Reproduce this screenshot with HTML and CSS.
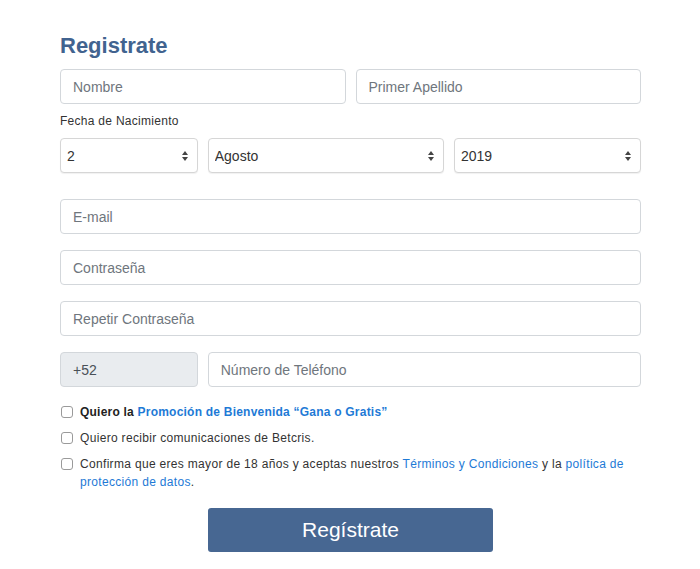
FILE: index.html
```html
<!DOCTYPE html>
<html lang="es">
<head>
<meta charset="utf-8">
<title>Registrate</title>
<link rel="stylesheet" href="styles.css">
</head>
<body>
<form class="page">
  <h1 class="title">Registrate</h1>
  <div class="row">
    <div class="col col-6"><input class="field" type="text" placeholder="Nombre"></div>
    <div class="col col-6"><input class="field" type="text" placeholder="Primer Apellido"></div>
  </div>
  <label class="label">Fecha de Nacimiento</label>
  <div class="row row-dob">
    <div class="col col-3 sel">
      <select class="field select"><option>2</option></select>
      <svg class="arrows" width="8" height="12" viewBox="0 0 8 12"><path d="M4 1 L7 5 H1 Z M4 11 L7 7 H1 Z" fill="#444"/></svg>
    </div>
    <div class="col col-5 sel">
      <select class="field select"><option>Agosto</option></select>
      <svg class="arrows" width="8" height="12" viewBox="0 0 8 12"><path d="M4 1 L7 5 H1 Z M4 11 L7 7 H1 Z" fill="#444"/></svg>
    </div>
    <div class="col col-4 sel">
      <select class="field select"><option>2019</option></select>
      <svg class="arrows" width="8" height="12" viewBox="0 0 8 12"><path d="M4 1 L7 5 H1 Z M4 11 L7 7 H1 Z" fill="#444"/></svg>
    </div>
  </div>
  <div class="row"><div class="col col-12"><input class="field" type="email" placeholder="E-mail"></div></div>
  <div class="row"><div class="col col-12"><input class="field" type="password" placeholder="Contraseña"></div></div>
  <div class="row"><div class="col col-12"><input class="field" type="password" placeholder="Repetir Contraseña"></div></div>
  <div class="row row-phone">
    <div class="col col-3"><input class="field readonly" type="text" value="+52" readonly></div>
    <div class="col col-9"><input class="field" type="tel" placeholder="Número de Teléfono"></div>
  </div>
  <div class="checks">
    <label class="check"><span class="box"></span><span class="ctext"><b>Quiero la <a class="link" href="#">Promoción de Bienvenida “Gana o Gratis”</a></b></span></label>
    <label class="check"><span class="box"></span><span class="ctext">Quiero recibir comunicaciones de Betcris.</span></label>
    <label class="check"><span class="box"></span><span class="ctext">Confirma que eres mayor de 18 años y aceptas nuestros <a class="link" href="#">Términos y Condiciones</a> y la <a class="link" href="#">política de</a> <a class="link" href="#">protección de datos</a>.</span></label>
  </div>
  <div class="row">
    <div class="col col-6 offset-3"><button class="btn" type="button">Regístrate</button></div>
  </div>
</form>
</body>
</html>
```

FILE: styles.css
```css
* { box-sizing: border-box; }
html, body { margin: 0; padding: 0; background: #fff; }
body {
  font-family: "Liberation Sans", Arial, sans-serif;
  color: #333;
  width: 700px;
}
.page {
  width: 581px;
  margin: 0 0 0 60px;
  padding-top: 33px;
}
.title {
  margin: 0 0 10px;
  font-size: 22px;
  line-height: 26px;
  font-weight: 700;
  color: #41638f;
}
.row {
  display: flex;
  margin: 0 -5px 16px;
}
.col { padding: 0 5px; position: relative; }
.col-3 { width: 25%; }
.col-4 { width: 33.3333%; }
.col-5 { width: 41.6667%; }
.col-6 { width: 50%; }
.col-9 { width: 75%; }
.col-12 { width: 100%; }
.offset-3 { margin-left: 25%; }
.row-dob { margin-bottom: 26px; }
.label {
  display: block;
  font-size: 12px;
  line-height: 16px;
  letter-spacing: 0.28px;
  margin: -7px 0 9px;
  color: #333;
}
.field {
  display: block;
  width: 100%;
  height: 35px;
  border: 1px solid #d3d7db;
  border-radius: 4px;
  background: #fff;
  padding: 0 12px;
  font-family: "Liberation Sans", Arial, sans-serif;
  font-size: 14px;
  color: #444;
  outline: none;
}
.field::placeholder { color: #6f767d; }
.readonly {
  background: #e9ecef;
  color: #495057;
  padding-left: 12px;
}
.select {
  appearance: none;
  -webkit-appearance: none;
  padding-left: 6px;
  color: #333;
  border-color: #d6d6d6;
  box-shadow: 0 1px 1px rgba(0,0,0,0.06);
}
.arrows {
  position: absolute;
  right: 14px;
  top: 12px;
  pointer-events: none;
}
.checks {
  margin: 14px 0 17px;
}
.check {
  display: flex;
  align-items: flex-start;
  font-size: 12px;
  line-height: 18px;
  letter-spacing: 0.32px;
  color: #333;
  margin-bottom: 8px;
}
.check:last-child { margin-bottom: 0; }
.box {
  flex: none;
  width: 12px;
  height: 12px;
  margin: 3px 7px 0 1px;
  border: 1px solid #9a9a9a;
  border-radius: 3px;
  background: #fff;
}
.ctext b { font-weight: 700; color: #222; letter-spacing: 0.22px; }
.link {
  color: #1e7ad6;
  text-decoration: none;
}
.btn {
  display: block;
  width: 100%;
  height: 44px;
  border: none;
  border-radius: 3px;
  background: #476792;
  color: #fff;
  font-family: "Liberation Sans", Arial, sans-serif;
  font-size: 21px;
  cursor: pointer;
}
```
